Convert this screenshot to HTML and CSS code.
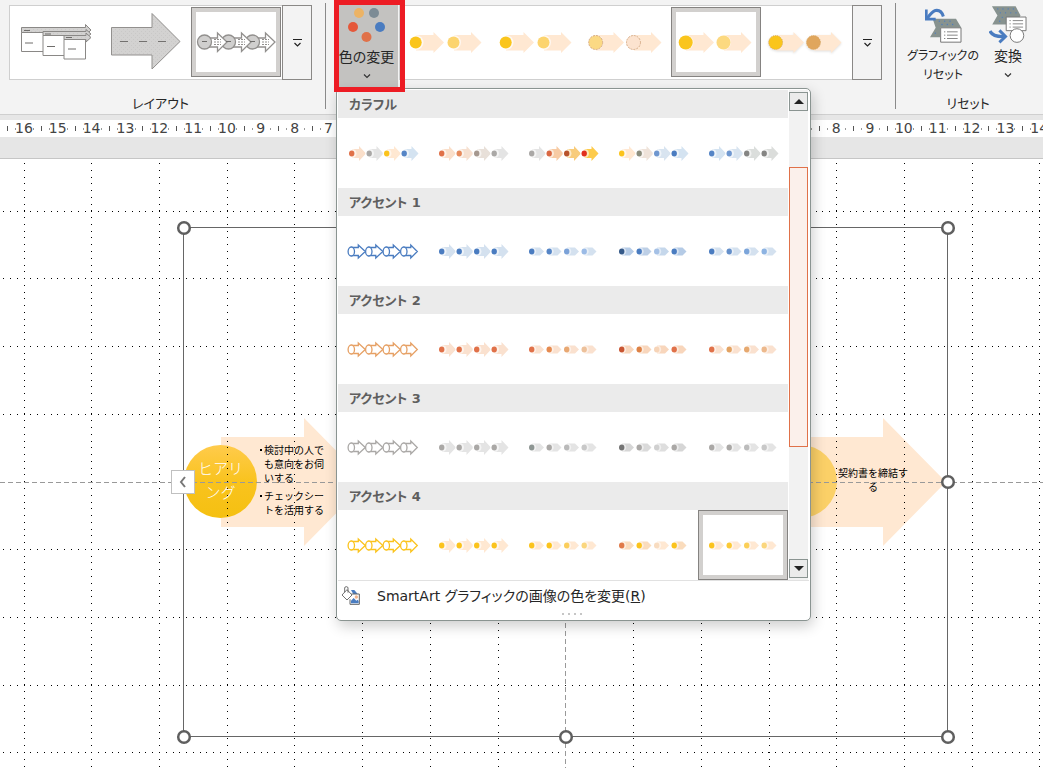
FILE: index.html
```html
<!DOCTYPE html>
<html lang="ja">
<head>
<meta charset="utf-8">
<title>SmartArt</title>
<link rel="stylesheet" href="styles.css">
</head>
<body>
<svg class="defs" aria-hidden="true">
  <symbol id="fill4" viewBox="0 0 90 70">
    <g><path fill="var(--a1)" d="M14 31H21V28L28 35.500L21 43V40H14Z"/><circle cx="14" cy="35.500" r="4.500" fill="#fff" opacity=".6"/><ellipse cx="13.700" cy="35.500" rx="2.700" ry="3" fill="var(--c1)"/></g>
    <g transform="translate(17.500)"><path fill="var(--a2)" d="M14 31H21V28L28 35.500L21 43V40H14Z"/><circle cx="14" cy="35.500" r="4.500" fill="#fff" opacity=".6"/><ellipse cx="13.700" cy="35.500" rx="2.700" ry="3" fill="var(--c2)"/></g>
    <g transform="translate(35)"><path fill="var(--a3)" d="M14 31H21V28L28 35.500L21 43V40H14Z"/><circle cx="14" cy="35.500" r="4.500" fill="#fff" opacity=".6"/><ellipse cx="13.700" cy="35.500" rx="2.700" ry="3" fill="var(--c3)"/></g>
    <g transform="translate(52.500)"><path fill="var(--a4)" d="M14 31H21V28L28 35.500L21 43V40H14Z"/><circle cx="14" cy="35.500" r="4.500" fill="#fff" opacity=".6"/><ellipse cx="13.700" cy="35.500" rx="2.700" ry="3" fill="var(--c4)"/></g>
  </symbol>
  <symbol id="grad4" viewBox="0 0 90 70">
    <g><path fill="var(--a1)" d="M14 31.500H22L26 35.500L22 39.500H14Z"/><circle cx="14" cy="35.500" r="4.200" fill="#fff" opacity=".5"/><ellipse cx="13.700" cy="35.500" rx="2.700" ry="3" fill="var(--c1)"/></g>
    <g transform="translate(17.500)"><path fill="var(--a2)" d="M14 31.500H22L26 35.500L22 39.500H14Z"/><circle cx="14" cy="35.500" r="4.200" fill="#fff" opacity=".5"/><ellipse cx="13.700" cy="35.500" rx="2.700" ry="3" fill="var(--c2)"/></g>
    <g transform="translate(35)"><path fill="var(--a3)" d="M14 31.500H22L26 35.500L22 39.500H14Z"/><circle cx="14" cy="35.500" r="4.200" fill="#fff" opacity=".5"/><ellipse cx="13.700" cy="35.500" rx="2.700" ry="3" fill="var(--c3)"/></g>
    <g transform="translate(52.500)"><path fill="var(--a4)" d="M14 31.500H22L26 35.500L22 39.500H14Z"/><circle cx="14" cy="35.500" r="4.200" fill="#fff" opacity=".5"/><ellipse cx="13.700" cy="35.500" rx="2.700" ry="3" fill="var(--c4)"/></g>
  </symbol>
  <symbol id="line4" viewBox="0 0 90 70">
    <g fill="#fff" stroke="var(--c1)" stroke-width="1.300" transform="translate(-.7)">
      <path d="M14 31.500H21V29L28 35.500L21 42V39.500H14Z"/><ellipse cx="14" cy="35.500" rx="3.200" ry="4.500"/>
      <path d="M31.500 31.500H38.500V29L45.500 35.500L38.500 42V39.500H31.500Z"/><ellipse cx="31.500" cy="35.500" rx="3.200" ry="4.500"/>
      <path d="M49 31.500H56V29L63 35.500L56 42V39.500H49Z"/><ellipse cx="49" cy="35.500" rx="3.200" ry="4.500"/>
      <path d="M66.500 31.500H73.500V29L80 35.500L73.500 42V39.500H66.500Z"/><ellipse cx="66.500" cy="35.500" rx="3.200" ry="4.500"/>
    </g>
  </symbol>
  <symbol id="style2" viewBox="0 0 90 70">
    <path fill="#ffe8d2" d="M15 28H32.500V25L43 35.500L32.500 46V43.500H15ZM53 28H70V25L80.500 35.500L70 46V43.500H53Z"/>
    <g fill="#fff" opacity=".7"><circle cx="15" cy="35.500" r="7.500"/><circle cx="52.500" cy="35.500" r="7.500"/></g>
    <g class="style-dots"><circle cx="14.700" cy="35.500" fill="var(--c1)"/><circle cx="52.500" cy="35.500" fill="var(--c2)"/></g>
  </symbol>
  <symbol id="more" viewBox="0 0 12 10"><path d="M2 1.500H11M3.500 5L6.500 8L9.500 5" fill="none" stroke="#222" stroke-width="1.200"/></symbol>
  <symbol id="down" viewBox="0 0 8 6"><path d="M1 1.500L4 4.500L7 1.500" fill="none" stroke="#333" stroke-width="1.200"/></symbol>
  <pattern id="speck" width="4" height="4" patternUnits="userSpaceOnUse"><rect width="4" height="4" fill="#d3d2d1"/><path d="M0 0h1v1H0zM2 2h1v1H2z" fill="#c9c8c7"/></pattern>
</svg>

<header class="ribbon">
  <section class="group group-layout">
    <div class="gallery">
      <button class="cell" aria-label="レイアウト 1"><svg viewBox="0 0 90 70">
        <g stroke="#8a8886" fill="#fff"><path d="M10.500 25.500H32.500V44.500H10.500Z"/><path fill="url(#speck)" d="M10.500 20.500H74.500V17.500L80 23L75 28V25.500H10.500Z"/>
        <path d="M32 28.500H54V48.500H32Z"/><path fill="url(#speck)" d="M32 24.500H75V22.500L80 27L75 31V28.500H32Z"/>
        <path d="M53 32.500H74.500V52H53Z"/><path fill="url(#speck)" d="M53 28.500H75V26L80 30.500L75 35V32.500H53Z"/></g>
        <path d="M13 23.500H19M34 27H40M55 30.500H61M14 36H22M36 39.500H44M57 42H65" stroke="#6f6d6b" fill="none"/></svg></button>
      <button class="cell" aria-label="レイアウト 2"><svg viewBox="0 0 90 70"><path d="M10.500 20.500H51V6.500L79 34.500L51 62V48H10.500Z" fill="url(#speck)" stroke="#92908e"/><path d="M19 34.500H27M38 34.500H46M57 34.500H65" stroke="#73716f"/></svg></button>
      <button class="cell selected" aria-label="レイアウト 3"><svg viewBox="0 0 90 70">
        <g fill="#fff" stroke="#92908e" stroke-width="1.300"><path d="M62 31H74.500V26L84 35L74.500 44.500V40H62Z"/><circle cx="61.500" cy="35" r="7" fill="#d0cfce"/><path d="M38 31H50.500V26L60 35L50.500 44.500V40H38Z"/><circle cx="37.500" cy="35" r="7" fill="#d0cfce"/><path d="M14 31H26.500V26L36 35L26.500 44.500V40H14Z"/><circle cx="13.500" cy="35" r="7" fill="#d0cfce"/></g>
        <path d="M11 34.500H16M35 34.500H40M59 34.500H64" stroke="#6f6d6b"/><path d="M23 32.500H30M23 35H30M23 37.500H30M47 32.500H54M47 35H54M47 37.500H54M71 32.500H78M71 35H78M71 37.500H78" stroke="#92908e" stroke-dasharray="2 1"/></svg></button>
      <button class="more" aria-label="その他のレイアウト"><svg><use href="#more"/></svg></button>
    </div>
    <h2 class="group-name">レイアウト</h2>
  </section>

  <section class="group group-style">
    <div class="color-picker">
      <button class="color-button" aria-expanded="true">
        <svg class="color-icon" viewBox="0 0 38 36"><circle cx="11" cy="7" r="5" fill="#ecb365"/><circle cx="26" cy="7" r="5" fill="#7c8b95"/><circle cx="5" cy="21" r="5" fill="#e5583a"/><circle cx="32" cy="21" r="5" fill="#4a7cc0"/><circle cx="18.500" cy="31" r="5" fill="#e07149"/></svg>
        <span>色の変更</span>
        <svg class="down"><use href="#down"/></svg>
      </button>
      <div class="highlight"></div>

      <div class="menu">
        <div class="menu-body">
          <div class="menu-list">
            <h3>カラフル</h3>
            <div class="swatches">
              <button class="cell m1" aria-label="カラフル 1"><svg><use href="#fill4"/></svg></button>
              <button class="cell m2" aria-label="カラフル 2"><svg><use href="#fill4"/></svg></button>
              <button class="cell m3" aria-label="カラフル 3"><svg><use href="#fill4"/></svg></button>
              <button class="cell m4" aria-label="カラフル 4"><svg><use href="#fill4"/></svg></button>
              <button class="cell m5" aria-label="カラフル 5"><svg><use href="#fill4"/></svg></button>
            </div>
            <h3>アクセント 1</h3>
            <div class="swatches blue">
              <button class="cell" aria-label="アクセント 1 枠線"><svg><use href="#line4"/></svg></button>
              <button class="cell" aria-label="アクセント 1 塗りつぶし"><svg><use href="#fill4"/></svg></button>
              <button class="cell fade" aria-label="アクセント 1 グラデーション"><svg><use href="#grad4"/></svg></button>
              <button class="cell loop" aria-label="アクセント 1 ループ"><svg><use href="#grad4"/></svg></button>
              <button class="cell soft" aria-label="アクセント 1 透過"><svg><use href="#grad4"/></svg></button>
            </div>
            <h3>アクセント 2</h3>
            <div class="swatches orange">
              <button class="cell outline" aria-label="アクセント 2 枠線"><svg><use href="#line4"/></svg></button>
              <button class="cell" aria-label="アクセント 2 塗りつぶし"><svg><use href="#fill4"/></svg></button>
              <button class="cell fade" aria-label="アクセント 2 グラデーション"><svg><use href="#grad4"/></svg></button>
              <button class="cell loop" aria-label="アクセント 2 ループ"><svg><use href="#grad4"/></svg></button>
              <button class="cell soft" aria-label="アクセント 2 透過"><svg><use href="#grad4"/></svg></button>
            </div>
            <h3>アクセント 3</h3>
            <div class="swatches gray">
              <button class="cell" aria-label="アクセント 3 枠線"><svg><use href="#line4"/></svg></button>
              <button class="cell" aria-label="アクセント 3 塗りつぶし"><svg><use href="#fill4"/></svg></button>
              <button class="cell fade" aria-label="アクセント 3 グラデーション"><svg><use href="#grad4"/></svg></button>
              <button class="cell loop" aria-label="アクセント 3 ループ"><svg><use href="#grad4"/></svg></button>
              <button class="cell soft" aria-label="アクセント 3 透過"><svg><use href="#grad4"/></svg></button>
            </div>
            <h3>アクセント 4</h3>
            <div class="swatches gold">
              <button class="cell" aria-label="アクセント 4 枠線"><svg><use href="#line4"/></svg></button>
              <button class="cell" aria-label="アクセント 4 塗りつぶし"><svg><use href="#fill4"/></svg></button>
              <button class="cell fade" aria-label="アクセント 4 グラデーション"><svg><use href="#grad4"/></svg></button>
              <button class="cell loop" aria-label="アクセント 4 ループ"><svg><use href="#grad4"/></svg></button>
              <button class="cell soft selected" aria-label="アクセント 4 透過"><svg><use href="#grad4"/></svg></button>
            </div>
          </div>
          <div class="scrollbar">
            <button class="scroll-button" aria-label="上へ"><svg viewBox="0 0 10 5"><path d="M0 5L5 0L10 5Z" fill="#222"/></svg></button>
            <div class="track"><div class="thumb"></div></div>
            <button class="scroll-button" aria-label="下へ"><svg viewBox="0 0 10 5"><path d="M0 0L5 5L10 0Z" fill="#222"/></svg></button>
          </div>
        </div>
        <button class="recolor">
          <svg viewBox="0 0 60 60"><path d="M30 12h10l12 14h-14z" fill="#4a7cc0"/><path d="M31 24H55V55H27V40" fill="#fff" stroke="#666" stroke-width="3"/><path d="M30 52V44l8-8 8 8 4-3 3 4v7z" fill="#4a7cc0"/><circle cx="46" cy="33" r="5" fill="#f2b48c"/><path d="M3 27L18 11L33 27L18 42Z" fill="#fff" stroke="#555" stroke-width="2.500"/><path d="M11 19V6q0-4 5-4t5 4V20" fill="none" stroke="#555" stroke-width="2.500"/></svg>
          <span>SmartArt グラフィックの画像の色を変更(<u>R</u>)</span>
        </button>
        <div class="grip"><i></i><i></i><i></i><i></i></div>
      </div>
    </div>
    <div class="gallery">
      <button class="cell s1" aria-label="スタイル 1"><svg><use href="#style2"/></svg></button>
      <button class="cell s1" aria-label="スタイル 2"><svg><use href="#style2"/></svg></button>
      <button class="cell s3" aria-label="スタイル 3"><svg><use href="#style2"/></svg></button>
      <button class="cell s4 selected" aria-label="スタイル 4"><svg><use href="#style2"/></svg></button>
      <button class="cell s5" aria-label="スタイル 5"><svg><use href="#style2"/></svg></button>
      <button class="more" aria-label="その他のスタイル"><svg><use href="#more"/></svg></button>
    </div>
  </section>

  <section class="group group-reset">
    <div class="commands">
      <button class="command reset">
        <svg viewBox="794 18 114 108"><path d="M820 55H890L906 82H843V110H812L829 82Z" fill="#87928f"/><g fill="#4a7cc0"><circle cx="840" cy="62" r="2"/><circle cx="856" cy="62" r="2"/><circle cx="872" cy="62" r="2"/><circle cx="848" cy="72" r="2"/><circle cx="864" cy="72" r="2"/><circle cx="880" cy="72" r="2"/><circle cx="828" cy="98" r="2"/></g><path d="M844 82H905V125H844Z" fill="#fff" stroke="#777" stroke-width="3"/><path d="M854 94h4M863 94h32M854 104h4M863 104h32M854 114h4M863 114h32" stroke="#888" stroke-width="3"/><path d="M852 48Q846 27 828 30Q818 33 804 53" fill="none" stroke="#4a7cc0" stroke-width="9"/><path d="M801 27V56H829" fill="none" stroke="#4a7cc0" stroke-width="8"/></svg>
        <span>グラフィックの<br>リセット</span>
      </button>
      <button class="command convert">
        <svg viewBox="983 18 117 120"><path d="M992 22H1065L1080 50L1066 78H993L1009 50Z" fill="#87928f"/><g fill="#4a7cc0"><circle cx="1010" cy="30" r="2"/><circle cx="1026" cy="30" r="2"/><circle cx="1042" cy="30" r="2"/><circle cx="1058" cy="30" r="2"/><circle cx="1018" cy="42" r="2"/><circle cx="1034" cy="42" r="2"/><circle cx="1050" cy="42" r="2"/><circle cx="1066" cy="42" r="2"/><circle cx="1024" cy="56" r="2"/><circle cx="1016" cy="68" r="2"/></g><path d="M1036 55H1097V97H1036Z" fill="#fff" stroke="#777" stroke-width="3"/><path d="M1046 66h4M1056 66h32M1046 76h4M1056 76h32M1046 86h4M1056 86h32" stroke="#888" stroke-width="3"/><circle cx="1069" cy="112" r="21" fill="#fff" stroke="#777" stroke-width="3"/><path d="M986 98Q994 117 1032 115" fill="none" stroke="#4a7cc0" stroke-width="10"/><path d="M1015 96L1034 115L1015 133" fill="none" stroke="#4a7cc0" stroke-width="9"/></svg>
        <span>変換</span>
        <svg class="down"><use href="#down"/></svg>
      </button>
    </div>
    <h2 class="group-name">リセット</h2>
  </section>
</header>

<div class="ruler">
  <ol class="marks">
    <li>16</li><li>15</li><li>14</li><li>13</li><li>12</li><li>11</li><li>10</li><li>9</li><li>8</li><li>7</li><li>6</li><li>5</li><li>4</li><li>3</li><li>2</li><li>1</li><li>0</li><li>1</li><li>2</li><li>3</li><li>4</li><li>5</li><li>6</li><li>7</li><li>8</li><li>9</li><li>10</li><li>11</li><li>12</li><li>13</li><li>14</li>
  </ol>
</div>

<main class="canvas">
  <svg class="drawing" aria-hidden="true">
    <defs><linearGradient id="gold" x1="0" y1="0" x2="0" y2="1"><stop offset="0" stop-color="#ffcb4c"/><stop offset=".5" stop-color="#f9c31e"/><stop offset="1" stop-color="#f5c011"/></linearGradient></defs>
    <path fill="#ffe8d2" d="M221 278H304V259L367 323L304 387V368H221ZM801 278H883V259L946 323L883 387V368H801Z"/>
    <circle cx="220.500" cy="322.500" r="36.500" fill="url(#gold)"/>
    <circle cx="800.500" cy="322.500" r="36.500" fill="#fbd067"/>
    <g fill="none" stroke="#000" stroke-dasharray="1 5.770" shape-rendering="crispEdges">
      <path d="M-3.500 52.500H2600M-3.500 119.500H2600M-3.500 187.500H2600M-3.500 255.500H2600M-3.500 390.500H2600M-3.500 458.500H2600M-3.500 526.500H2600M-3.500 593.500H2600"/>
      <path d="M24.500 4V1600M91.500 4V1600M159.500 4V1600M227.500 4V1600M294.500 4V1600M362.500 4V1600M430.500 4V1600M498.500 4V1600M633.500 4V1600M701.500 4V1600M769.500 4V1600M836.500 4V1600M904.500 4V1600M972.500 4V1600M1039.500 4V1600"/>
    </g>
    <path d="M0 323.500H2600M565.500 0V1600" stroke="#999" stroke-dasharray="5 3" fill="none"/>
    <path d="M183.500 69V577.500H947.500V68.500H183Z" fill="none" stroke="#666"/>
    <g fill="#fff" stroke="#5f5f5f" stroke-width="2.500"><circle cx="184" cy="69" r="5.800"/><circle cx="948" cy="69" r="5.800"/><circle cx="184" cy="578" r="5.800"/><circle cx="566" cy="578" r="5.800"/><circle cx="948" cy="578" r="5.800"/><circle cx="948" cy="323" r="5.800"/></g>
  </svg>
  <div class="node-title">ヒアリ<br>ング</div>
  <ul class="node-text"><li>検討中の人で<br>も意向をお伺<br>いする</li><li>チェックシー<br>トを活用する</li></ul>
  <p class="node-result">契約書を締結す<br>る</p>
  <button class="pane-toggle" aria-label="テキスト ウィンドウ"><svg viewBox="0 0 8 12"><path d="M6 1L2 6L6 11" fill="none" stroke="#777" stroke-width="2"/></svg></button>
</main>
</body>
</html>
```
FILE: styles.css
```css
* { box-sizing: border-box; }

body {
  margin: 0;
  min-height: 100vh;
  display: flex;
  flex-direction: column;
  overflow: hidden;
  background: #fff;
  color: #262626;
  font: 13px/19px "DejaVu Sans", "Noto Sans CJK JP", sans-serif;
  font-feature-settings: "palt";
}

button {
  margin: 0;
  padding: 0;
  border: 0;
  background: none;
  color: inherit;
  font: inherit;
  font-feature-settings: inherit;
}

h2, h3, p, ul, ol { margin: 0; padding: 0; font-size: inherit; list-style: none; }

svg { display: block; }
.defs { position: absolute; width: 0; height: 0; }

/* Ribbon */
.ribbon {
  display: flex;
  height: 115px;
  flex: none;
  background: #f3f3f3;
  border-bottom: 1px solid #cfcfcf;
}

.group {
  position: relative;
  display: flex;
  flex-direction: column;
  justify-content: space-between;
  padding: 5px 0 1px;
  flex: none;
}

.group::after {
  content: "";
  position: absolute;
  right: 0;
  top: 3px;
  bottom: 5px;
  border-right: 1px solid #8a8a8a;
}

.group-layout { padding-left: 9px; padding-right: 14px; }
.group-style { flex-direction: row; justify-content: flex-start; padding: 5px 14px 0 8px; }
.group-reset { padding-left: 10px; padding-right: 10px; }
.group-reset::after { display: none; }

.group-name { font-weight: 400; text-align: center; }

.gallery {
  display: flex;
  height: 75px;
  padding-left: 1px;
  border: 1px solid #cfcfcf;
  border-right: 0;
  background: #fff;
}

.gallery .cell { margin: 1px 0; }

.cell {
  position: relative;
  width: 90px;
  height: 70px;
  flex: none;
}

.cell svg { width: 90px; height: 70px; }

.cell.selected::after {
  content: "";
  position: absolute;
  inset: 0;
  border: 5px solid #d2d0ce;
  outline: 1px solid #858381;
  outline-offset: -1px;
}

.more {
  display: flex;
  justify-content: center;
  align-items: center;
  width: 30px;
  margin: -1px 0 -1px 1px;
  border: 1px solid #8a8886;
  background: #f3f3f3;
}

.more svg { width: 12px; height: 10px; }
.down { width: 8px; height: 6px; }

.color-picker { position: relative; width: 65px; flex: none; }

.color-button {
  display: flex;
  flex-direction: column;
  align-items: center;
  width: 59px;
  height: 83px;
  margin: -1px 0 0 5px;
  padding: 2px 4px 0 0;
  background: #c3c2c0;
  font-size: 14px;
  white-space: nowrap;
}

.color-icon { width: 38px; height: 36px; margin-bottom: 6px; }
.color-button .down { margin-top: 6px; }

.highlight {
  position: absolute;
  z-index: 3;
  left: 0;
  top: -5px;
  width: 71px;
  height: 92px;
  border: 5px solid #ed1c24;
  pointer-events: none;
}

.commands { display: flex; gap: 6px; }

.command {
  display: flex;
  flex-direction: column;
  align-items: center;
  white-space: nowrap;
}

.command svg { width: 38px; margin-bottom: 3px; }
.reset { width: 74px; }
.reset svg { height: 39px; }
.reset span { font-size: 12px; }
.convert { width: 44px; font-size: 14px; }
.convert svg { height: 39px; }
.command .down { width: 8px; height: 6px; margin-top: 6px; }

/* Colour menu */
.menu {
  position: absolute;
  z-index: 2;
  left: 2px;
  top: 83px;
  width: 475px;
  padding: 1px 1px 3px;
  border: 1px solid #8a9491;
  border-radius: 5px;
  background: #fff;
  box-shadow: 2px 5px 14px rgb(0 0 0 / 20%);
}

.menu-body { display: flex; gap: 1px; border-bottom: 1px solid #e1e1e1; }

.menu h3 {
  height: 28px;
  padding-left: 11px;
  background: #ebebeb;
  color: #5f5f5f;
  font-weight: 700;
  line-height: 29px;
}

.swatches { display: flex; }

.scrollbar {
  display: flex;
  flex-direction: column;
  width: 19px;
  padding: 2px 0;
  background: #f2f2f2;
}

.scroll-button {
  display: flex;
  justify-content: center;
  align-items: center;
  height: 19px;
  border: 1px solid #8a9491;
  background: #ebebeb;
}

.scroll-button svg { width: 10px; height: 5px; }
.track { flex: 1; padding-top: 56px; }
.thumb { height: 280px; border: 1px solid #e07149; background: #fbf0eb; }

.recolor {
  display: flex;
  align-items: center;
  gap: 16px;
  padding: 4px 3px 6px;
  font-size: 14px;
  line-height: 22px;
}

.recolor svg { width: 20px; height: 20px; }

.grip { display: flex; justify-content: center; gap: 4px; padding: 0 4px 2px 0; }
.grip i { width: 2px; height: 2px; background: #c6c6c6; }

/* Palettes */
.blue { --c1: #4a7cc0; --c2: #4a7cc0; --c3: #4a7cc0; --c4: #4a7cc0; --a1: #d4e1ef; --a2: #d4e1ef; --a3: #d4e1ef; --a4: #d4e1ef; }
.blue .fade { --c2: #5585c6; --c3: #7ba2d8; --c4: #9bbbe6; }
.blue .loop { --c1: #355988; --c3: #a5c1e6; --a1: #b5cbe6; --a2: #bdcfe6; --a3: #c5d7eb; --a4: #b5cbe6; }
.blue .soft { --c2: #648fca; --c3: #7ca5da; --c4: #8db3e2; }

.orange { --c1: #e07149; --c2: #e07149; --c3: #e07149; --c4: #e07149; --a1: #fae1cf; --a2: #fae1cf; --a3: #fae1cf; --a4: #fae1cf; }
.orange .outline { --c1: #e6a064; }
.orange .fade { --c2: #e58a50; --c3: #e8a873; --c4: #edc19b; }
.orange .loop { --c1: #c85532; --c2: #dd8145; --c3: #f6d4b8; --a1: #f8d6bc; --a2: #f8d6bc; --a3: #f8d6bc; --a4: #f8d6bc; }
.orange .soft { --c2: #e2a262; --c3: #e6a970; --c4: #edb98d; }

.gray { --c1: #aaa8a6; --c2: #aaa8a6; --c3: #aaa8a6; --c4: #aaa8a6; --a1: #e4e4e4; --a2: #e4e4e4; --a3: #e4e4e4; --a4: #e4e4e4; }
.gray .fade { --c1: #8e9693; --c3: #bababa; --c4: #c8c8c8; }
.gray .loop { --c1: #747474; --c3: #d0d0d0; --a1: #d6d6d6; --a2: #dadada; --a3: #dedede; --a4: #d6d6d6; }
.gray .soft { --c3: #bcbcbc; --c4: #c8c8c8; }

.gold { --c1: #fbc31c; --c2: #fbc31c; --c3: #fbc31c; --c4: #fbc31c; --a1: #ffe8d2; --a2: #ffe8d2; --a3: #ffe8d2; --a4: #ffe8d2; }
.gold .fade { --c3: #fbce5c; --c4: #fbd67d; }
.gold .loop { --c1: #e07a49; --c3: #f8dcc0; --a1: #fadcbd; --a2: #fadcbd; --a4: #fadcbd; }
.gold .soft { --c2: #fbc935; --c3: #fbcf57; --c4: #fbd67d; }

.m1 { --c1: #e07149; --c2: #aaa8a6; --c3: #fbc31c; --c4: #5585c6; --a1: #fadfca; --a2: #e4e4e4; --a3: #ffe8d2; --a4: #d4e3f1; }
.m2 { --c1: #e07149; --c2: #e58a5c; --c3: #a5988f; --c4: #aaa8a6; --a1: #fadfca; --a2: #f6e0d0; --a3: #e8e0d9; --a4: #e4e4e4; }
.m3 { --c1: #aaa8a6; --c2: #d96843; --c3: #b8532c; --c4: #e1301e; --a1: #e4e4e4; --a2: #f7cba4; --a3: #f8cc7b; --a4: #fdcb4c; }
.m4 { --c1: #fbc31c; --c2: #8b8d7d; --c3: #6f97cf; --c4: #4a7cc0; --a1: #ffe8d2; --a2: #efe3da; --a3: #d8e4f0; --a4: #d4e3f1; }
.m5 { --c1: #5585c6; --c2: #6f97cf; --c3: #858583; --c4: #858583; --a1: #d4e3f1; --a2: #d8e4f0; --a3: #dbdedc; --a4: #dbdddb; }

.style-dots circle { r: var(--r, 6px); stroke: var(--ring, none); stroke-dasharray: var(--dash, none); }
.s1 { --c1: #fac51c; --c2: #fcd46e; }
.s3 { --r: 7px; --ring: #d6a880; --dash: 2 1; --c1: #fbd984; --c2: #fce3cf; }
.s4 { --r: 7px; --c1: #fac51c; --c2: #fcd980; }
.s5 { --r: 7px; --ring: #d8a45e; --dash: 1 1; --c1: #fac51c; --c2: #e0a65c; }
.s5 svg { filter: drop-shadow(0 1px 1px rgb(0 0 0 / 12%)); }

/* Ruler */
.ruler {
  flex: none;
  height: 44px;
  padding-top: 5px;
  overflow: hidden;
  border-bottom: 1px solid #c6c6c6;
  background: #e6e6e6;
}

.marks {
  display: flex;
  height: 17px;
  margin-right: -13px;
  padding-left: 7px;
  background: #fff;
  color: #444;
  font-size: 14px;
  line-height: 17px;
}

.marks li {
  flex: 1 1 0;
  text-align: center;
  background:
    linear-gradient(#555, #555) 0 6px / 1px 5px no-repeat,
    linear-gradient(#999, #999) 8px 8px / 1px 2px no-repeat,
    linear-gradient(#999, #999) 26px 8px / 1px 2px no-repeat;
}

/* Slide canvas */
.canvas { position: relative; flex: 1; overflow: hidden; }
.drawing { position: absolute; width: 100%; height: 100%; }

.node-title, .node-text, .node-result {
  position: absolute;
  font-family: "Noto Sans CJK JP", sans-serif;
  font-feature-settings: normal;
}

.node-title {
  left: 184px;
  top: 297px;
  width: 73px;
  color: #fff;
  font-size: 15px;
  font-weight: 300;
  line-height: 24px;
  text-align: center;
}

.node-text { left: 258px; top: 284px; font-size: 10px; line-height: 14px; color: #000; }
.node-text li { position: relative; padding-left: 6px; margin-bottom: 4px; }
.node-text li::before { content: ""; position: absolute; left: 2px; top: 6px; width: 2px; height: 2px; background: #000; }
.node-result { left: 837px; top: 307px; width: 72px; color: #000; font-size: 10px; line-height: 14px; text-align: center; }

.pane-toggle {
  position: absolute;
  left: 171px;
  top: 311px;
  display: flex;
  justify-content: center;
  align-items: center;
  width: 24px;
  height: 24px;
  border: 1px solid #c0c0c0;
  background: #fff;
}

.pane-toggle svg { width: 8px; height: 12px; }
```
